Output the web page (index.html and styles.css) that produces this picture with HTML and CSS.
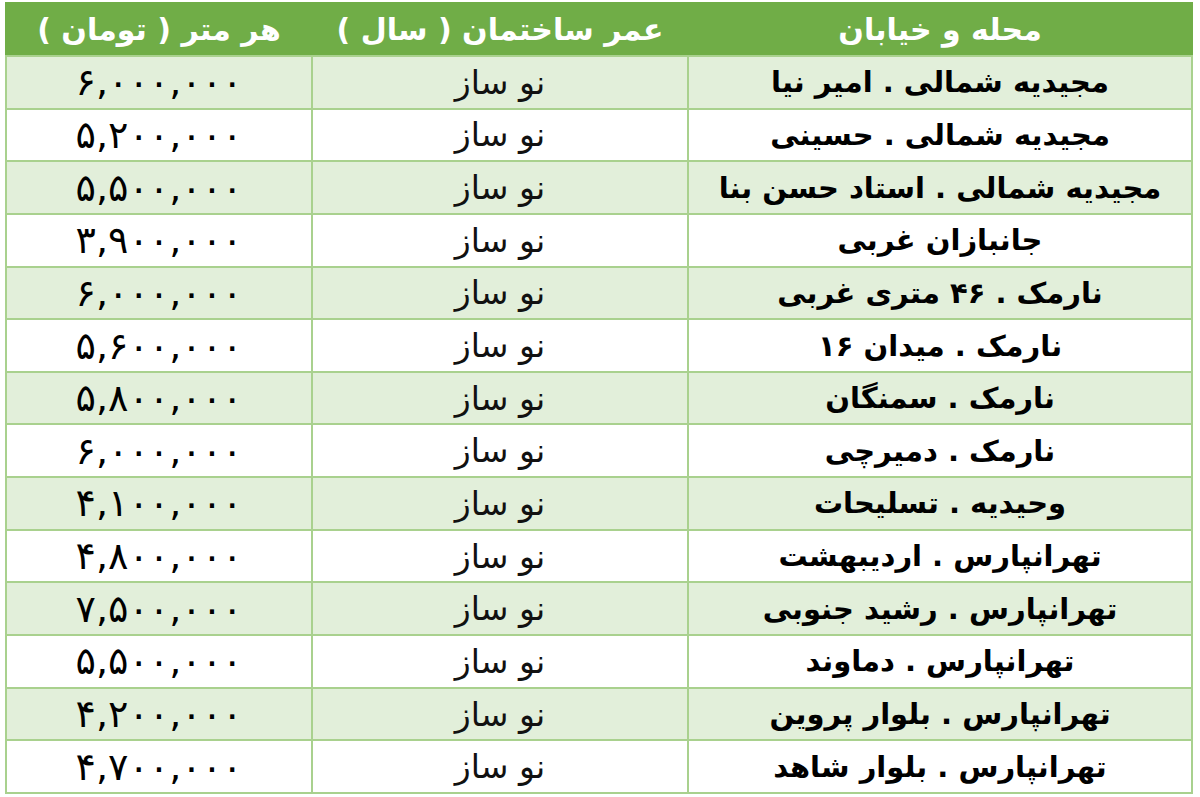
FILE: index.html
```html
<!DOCTYPE html>
<html lang="fa" dir="rtl">
<head>
<meta charset="utf-8">
<title>قیمت مسکن</title>
<link rel="stylesheet" href="styles.css">
</head>
<body>
<table class="prices">
  <colgroup>
    <col class="c-street">
    <col class="c-age">
    <col class="c-price">
  </colgroup>
  <thead>
    <tr>
      <th>محله و خیابان</th>
      <th>عمر ساختمان ( سال )</th>
      <th>هر متر ( تومان )</th>
    </tr>
  </thead>
  <tbody>
    <tr class="band"><td class="street">مجیدیه شمالی . امیر نیا</td><td class="age">نو ساز</td><td class="price">۶,۰۰۰,۰۰۰</td></tr>
    <tr><td class="street">مجیدیه شمالی . حسینی</td><td class="age">نو ساز</td><td class="price">۵,۲۰۰,۰۰۰</td></tr>
    <tr class="band"><td class="street">مجیدیه شمالی . استاد حسن بنا</td><td class="age">نو ساز</td><td class="price">۵,۵۰۰,۰۰۰</td></tr>
    <tr><td class="street">جانبازان غربی</td><td class="age">نو ساز</td><td class="price">۳,۹۰۰,۰۰۰</td></tr>
    <tr class="band"><td class="street">نارمک . ۴۶ متری غربی</td><td class="age">نو ساز</td><td class="price">۶,۰۰۰,۰۰۰</td></tr>
    <tr><td class="street">نارمک . میدان ۱۶</td><td class="age">نو ساز</td><td class="price">۵,۶۰۰,۰۰۰</td></tr>
    <tr class="band"><td class="street">نارمک . سمنگان</td><td class="age">نو ساز</td><td class="price">۵,۸۰۰,۰۰۰</td></tr>
    <tr><td class="street">نارمک . دمیرچی</td><td class="age">نو ساز</td><td class="price">۶,۰۰۰,۰۰۰</td></tr>
    <tr class="band"><td class="street">وحیدیه . تسلیحات</td><td class="age">نو ساز</td><td class="price">۴,۱۰۰,۰۰۰</td></tr>
    <tr><td class="street">تهرانپارس . اردیبهشت</td><td class="age">نو ساز</td><td class="price">۴,۸۰۰,۰۰۰</td></tr>
    <tr class="band"><td class="street">تهرانپارس . رشید جنوبی</td><td class="age">نو ساز</td><td class="price">۷,۵۰۰,۰۰۰</td></tr>
    <tr><td class="street">تهرانپارس . دماوند</td><td class="age">نو ساز</td><td class="price">۵,۵۰۰,۰۰۰</td></tr>
    <tr class="band"><td class="street">تهرانپارس . بلوار پروین</td><td class="age">نو ساز</td><td class="price">۴,۲۰۰,۰۰۰</td></tr>
    <tr><td class="street">تهرانپارس . بلوار شاهد</td><td class="age">نو ساز</td><td class="price">۴,۷۰۰,۰۰۰</td></tr>
  </tbody>
</table>
</body>
</html>
```
FILE: styles.css
```css
html, body {
  margin: 0;
  padding: 0;
  background: #ffffff;
}
body {
  padding: 2px 7px 0 7px;
  font-family: "DejaVu Sans", "Liberation Sans", sans-serif;
}
.prices {
  width: 1186px;
  border-collapse: collapse;
  table-layout: fixed;
  direction: rtl;
}
.c-street { width: 504px; }
.c-age { width: 376px; }
.c-price { width: 306px; }
.prices th,
.prices td {
  padding: 0;
  text-align: center;
  vertical-align: middle;
  border: 2px solid #a9d18e;
  white-space: nowrap;
  overflow: hidden;
}
.prices thead tr {
  height: 53px;
}
.prices th {
  background: #70ad47;
  color: #ffffff;
  font-weight: bold;
  font-size: 30px;
  border-color: #70ad47;
  border-bottom-color: #a9d18e;
}
.prices tbody tr {
  height: 52.65px;
}
.prices tbody tr.band td {
  background: #e2efda;
}
.street {
  font-weight: bold;
  font-size: 29px;
  color: #000000;
}
.age {
  font-size: 33px;
  color: #111111;
}
.price {
  font-size: 38px;
  color: #000000;
  direction: ltr;
  letter-spacing: 18px;
}
```
